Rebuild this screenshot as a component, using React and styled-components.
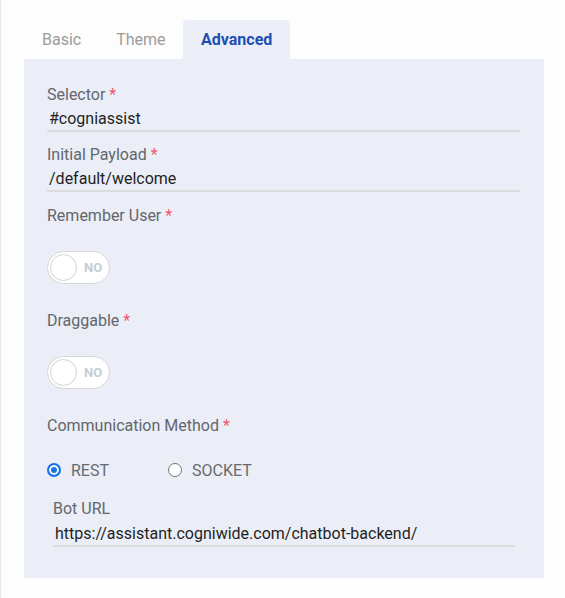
import React, { useState } from 'react'
import styled, { createGlobalStyle } from 'styled-components'

const GlobalStyle = createGlobalStyle`
    body {
        margin: 0;
        background: #fdfdfd;
        font-family: Roboto, "Liberation Sans", Arial, sans-serif;
    }
`

function Toggle({ on }) {
    return (
        <ToggleStyled>
            <span className="knob" />
            <span className="text">{on ? 'YES' : 'NO'}</span>
        </ToggleStyled>
    )
}

function Field({ label, value, inset, top }) {
    return (
        <FieldStyled $inset={inset} $top={top}>
            <Label>{label}{!inset && <Req> *</Req>}</Label>
            <Input readOnly value={value} $inset={inset} />
        </FieldStyled>
    )
}

function SwitchField({ label, on }) {
    return (
        <Section>
            <Label>{label}<Req> *</Req></Label>
            <Toggle on={on} />
        </Section>
    )
}

function App() {
    const [tab] = useState('Advanced')
    const [method, setMethod] = useState('REST')
    const tabs = ['Basic', 'Theme', 'Advanced']

    return (
        <Page>
            <GlobalStyle />
            <Tabs>
                {tabs.map((t) => (
                    <Tab key={t} $active={t === tab}>{t}</Tab>
                ))}
            </Tabs>
            <Panel>
                <Field label="Selector" value="#cogniassist" />
                <Field label="Initial Payload" value="/default/welcome" top={13} />

                <SwitchField label="Remember User" on={false} />
                <SwitchField label="Draggable" on={false} />

                <Section>
                    <Label>Communication Method<Req> *</Req></Label>
                    <RadioRow>
                        {['REST', 'SOCKET'].map((m) => (
                            <RadioOption key={m} onClick={() => setMethod(m)}>
                                <RadioDot $checked={method === m} />
                                {m}
                            </RadioOption>
                        ))}
                    </RadioRow>
                </Section>

                <Field label="Bot URL" value="https://assistant.cogniwide.com/chatbot-backend/" inset top={19} />
            </Panel>
        </Page>
    )
}

const Page = styled.div`
    min-height: 598px;
    border-left: 1px solid #e4e8f1;
    padding: 20px 20px 21px 23px;
    box-sizing: border-box;
    width: 565px;
`

const Tabs = styled.div`
    display: flex;
    height: 39px;
`

const Tab = styled.div`
    display: flex;
    align-items: center;
    padding: 0 ${p => p.$active ? '18px' : '17.5px'};
    font-size: 16px;
    font-weight: ${p => p.$active ? 700 : 400};
    color: ${p => p.$active ? '#1d4fb3' : '#9b9b9b'};
    background: ${p => p.$active ? '#ebeef6' : 'transparent'};
    border-radius: 4px 4px 0 0;
    cursor: pointer;
    &:first-child{
        padding-left: 18px;
    }
`

const Panel = styled.div`
    width: 520px;
    background: #ebeef6;
    padding: 26px 24px 31px 23px;
    box-sizing: border-box;
    display: flex;
    flex-direction: column;
`

const Section = styled.div`
    display: flex;
    flex-direction: column;
    align-items: flex-start;
    gap: 25px;
    margin-top: 27px;
    &:nth-child(3){
        margin-top: 14px;
    }
`

const FieldStyled = styled.div`
    display: flex;
    flex-direction: column;
    padding: 0 ${p => p.$inset ? '5px' : '0'} 0 ${p => p.$inset ? '6px' : '0'};
    margin-top: ${p => p.$top || 0}px;
`

const Label = styled.label`
    font-size: 16px;
    line-height: 20px;
    color: #62666d;
`

const Req = styled.span`
    color: #f0596c;
`

const Input = styled.input`
    font-family: inherit;
    font-size: 16px;
    color: #1f1f1f;
    background: transparent;
    border: none;
    border-bottom: 2px solid #dcdcdc;
    box-sizing: border-box;
    height: 26px;
    margin: ${p => p.$inset ? '2px' : '1px'} 0 0;
    padding: 0 0 0 2px;
    outline: none;
`

const ToggleStyled = styled.div`
    width: 63px;
    height: 33px;
    box-sizing: border-box;
    border: 1px solid #d6d6d6;
    border-radius: 17px;
    background: #fff;
    display: flex;
    align-items: center;
    padding: 0 2px;
    gap: 7px;
    .knob{
        width: 27px;
        height: 27px;
        box-sizing: border-box;
        border-radius: 50%;
        border: 1px solid #cfcfcf;
        background: #fff;
    }
    .text{
        font-size: 13px;
        font-weight: 700;
        color: #c6ccd6;
    }
`

const RadioRow = styled.div`
    display: flex;
    height: 20px;
    align-items: center;
    margin-top: -1px;
`

const RadioOption = styled.label`
    display: flex;
    align-items: center;
    gap: 10px;
    width: 121px;
    font-size: 16px;
    color: #676a70;
    cursor: pointer;
`

const RadioDot = styled.span`
    width: 14px;
    height: 14px;
    box-sizing: border-box;
    border-radius: 50%;
    border: ${p => p.$checked ? '2px solid #1a73e8' : '1px solid #767676'};
    box-shadow: ${p => p.$checked ? 'inset 0 0 0 2px #fff' : 'none'};
    background: ${p => p.$checked ? '#1a73e8' : '#fff'};
`

export default App
